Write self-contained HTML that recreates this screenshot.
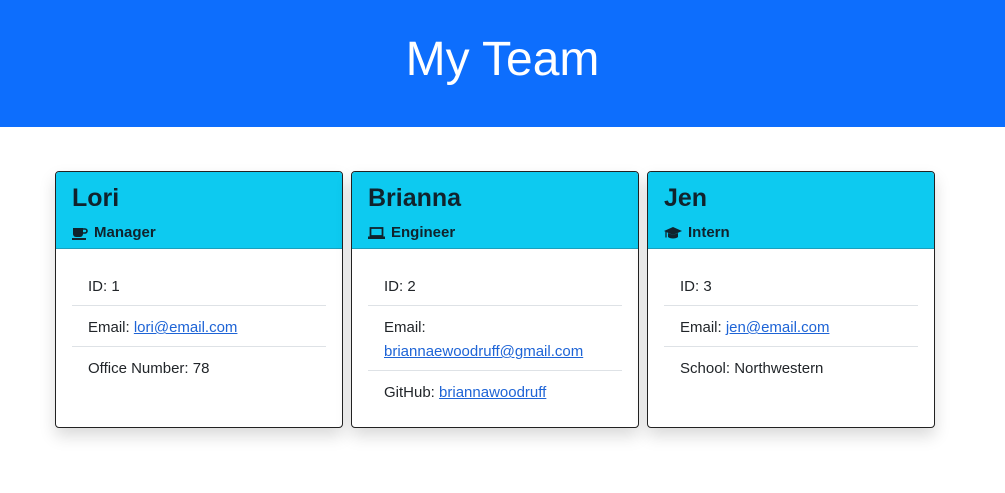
<!DOCTYPE html>
<html><head><style>
body{margin:0;font-family:"Liberation Sans",sans-serif;background:#fff;width:1005px;height:493px;overflow:hidden}
.top{height:127px;background:#0d6efd;color:#fff;text-align:center;font-size:48px;font-weight:300;line-height:120px}
.card{position:absolute;top:171px;width:286px;height:255px;border:1px solid #222;border-radius:4px;box-shadow:0 8px 16px rgba(0,0,0,.15);overflow:hidden;background:#fff}
.hd{height:76px;background:#0dcaf0;border-bottom:1px solid #1aa0bd;padding:0 16px;color:#10232d}
.nm{font-size:25px;padding-top:11px;line-height:30px;font-weight:600}
.rl{font-size:15px;margin-top:11px;line-height:18px;font-weight:600;display:flex;align-items:center;gap:6px}
ul{list-style:none;margin:16px 16px 0;padding:0}
li{padding:10px 16px 6px;font-size:15px;line-height:24px;color:#212529;border-bottom:1px solid #dee2e6}
li:last-child{border-bottom:none}
a{color:#1e64d6;text-decoration:underline}
</style></head><body>
<div class="top">My Team</div>
<div class="card" style="left:55px"><div class="hd"><div class="nm">Lori</div><div class="rl"><svg width="16" height="13" viewBox="0 0 16 13"><path d="M1 1h10v6a3 3 0 0 1-3 3H4a3 3 0 0 1-3-3z" fill="#10232d"/><path d="M11 2h2a2 2 0 0 1 0 4h-2" stroke="#10232d" stroke-width="1.6" fill="none"/><rect x="0" y="11" width="14" height="2" fill="#10232d"/></svg>Manager</div></div>
<ul><li>ID: 1</li><li>Email: <a>lori@email.com</a></li><li>Office Number: 78</li></ul></div>
<div class="card" style="left:351px"><div class="hd"><div class="nm">Brianna</div><div class="rl"><svg width="17" height="12" viewBox="0 0 17 12"><rect x="2.5" y="1" width="12" height="8" fill="none" stroke="#10232d" stroke-width="1.8"/><rect x="0" y="9.5" width="17" height="2.5" fill="#10232d"/></svg>Engineer</div></div>
<ul><li>ID: 2</li><li>Email:<br><a>briannaewoodruff@gmail.com</a></li><li>GitHub: <a>briannawoodruff</a></li></ul></div>
<div class="card" style="left:647px"><div class="hd"><div class="nm">Jen</div><div class="rl"><svg width="18" height="14" viewBox="0 0 18 14"><path d="M9 1L18 5 9 9 0 5z" fill="#10232d"/><path d="M4 7v4c2 2 8 2 10 0V7l-5 2z" fill="#10232d"/><path d="M2 5.5v6" stroke="#10232d" stroke-width="1.3"/></svg>Intern</div></div>
<ul><li>ID: 3</li><li>Email: <a>jen@email.com</a></li><li>School: Northwestern</li></ul></div>
</body></html>
